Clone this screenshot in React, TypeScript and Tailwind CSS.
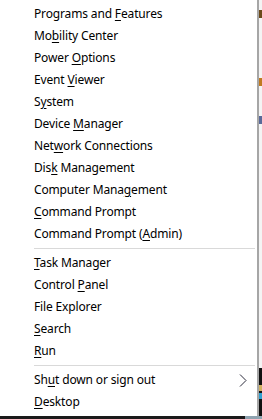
import React from 'react'

type Item = { pre: string; key?: string; post?: string; arrow?: boolean }

const group1: Item[] = [
  { pre: 'Programs and ', key: 'F', post: 'eatures' },
  { pre: 'Mo', key: 'b', post: 'ility Center' },
  { pre: 'Power ', key: 'O', post: 'ptions' },
  { pre: 'Event ', key: 'V', post: 'iewer' },
  { pre: 'S', key: 'y', post: 'stem' },
  { pre: 'Device ', key: 'M', post: 'anager' },
  { pre: 'Net', key: 'w', post: 'ork Connections' },
  { pre: 'Dis', key: 'k', post: ' Management' },
  { pre: 'Computer Mana', key: 'g', post: 'ement' },
  { pre: '', key: 'C', post: 'ommand Prompt' },
  { pre: 'Command Prompt (', key: 'A', post: 'dmin)' },
]

const group2: Item[] = [
  { pre: '', key: 'T', post: 'ask Manager' },
  { pre: 'Control ', key: 'P', post: 'anel' },
  { pre: 'File Explorer' },
  { pre: '', key: 'S', post: 'earch' },
  { pre: '', key: 'R', post: 'un' },
]

const group3: Item[] = [
  { pre: 'Sh', key: 'u', post: 't down or sign out', arrow: true },
  { pre: '', key: 'D', post: 'esktop' },
]

function MenuItem({ item }: { item: Item }) {
  return (
    <div className="h-[22px] flex items-center pl-[34px] pr-[10px] text-[12px] tracking-[-0.15px] text-[#000] leading-none">
      <span className="flex-1 whitespace-nowrap">
        {item.pre}
        {item.key && <span className="underline underline-offset-[2px]">{item.key}</span>}
        {item.post}
      </span>
      {item.arrow && (
        <svg width="8" height="13" viewBox="0 0 8 13">
          <path d="M1 0.5 L7 6.5 L1 12.5" fill="none" stroke="#2a2a3a" strokeWidth="1" />
        </svg>
      )}
    </div>
  )
}

function Separator() {
  return <div className="ml-[34px] mr-[2px] my-[3px] h-px bg-[#d9d9d9]" />
}

export default function App() {
  return (
    <div className="w-[262px] h-[419px] flex flex-col bg-white overflow-hidden" style={{ fontFamily: '"Noto Sans", "Open Sans", sans-serif' }}>
      <div className="flex flex-1">
        <div className="w-[257px] flex flex-col pt-[3px]">
          {group1.map((it, i) => <MenuItem key={i} item={it} />)}
          <Separator />
          {group2.map((it, i) => <MenuItem key={i} item={it} />)}
          <Separator />
          {group3.map((it, i) => <MenuItem key={i} item={it} />)}
        </div>
        <div className="w-[2px] bg-[#a6a6a6]" />
        <div className="w-[3px] flex flex-col bg-[#f4f4f4]">
          <div className="h-[10px]" />
          <div className="h-[8px] bg-[#6b4a1a]" />
          <div className="h-[60px]" />
          <div className="h-[8px] bg-[#c07a20]" />
          <div className="h-[30px]" />
          <div className="h-[8px] bg-[#5a6a9a]" />
          <div className="flex-1" />
          <div className="h-[48px] bg-[#111] flex flex-col justify-center gap-[2px]">
            <div className="h-[6px] bg-[#d0b060]" />
            <div className="h-[6px] bg-[#30a0d0]" />
          </div>
        </div>
      </div>
      <div className="h-[3px] flex">
        <div className="flex-1 bg-[#1a1a1a]" />
        <div className="w-[17px] bg-[#8fa3b0]" />
      </div>
    </div>
  )
}
